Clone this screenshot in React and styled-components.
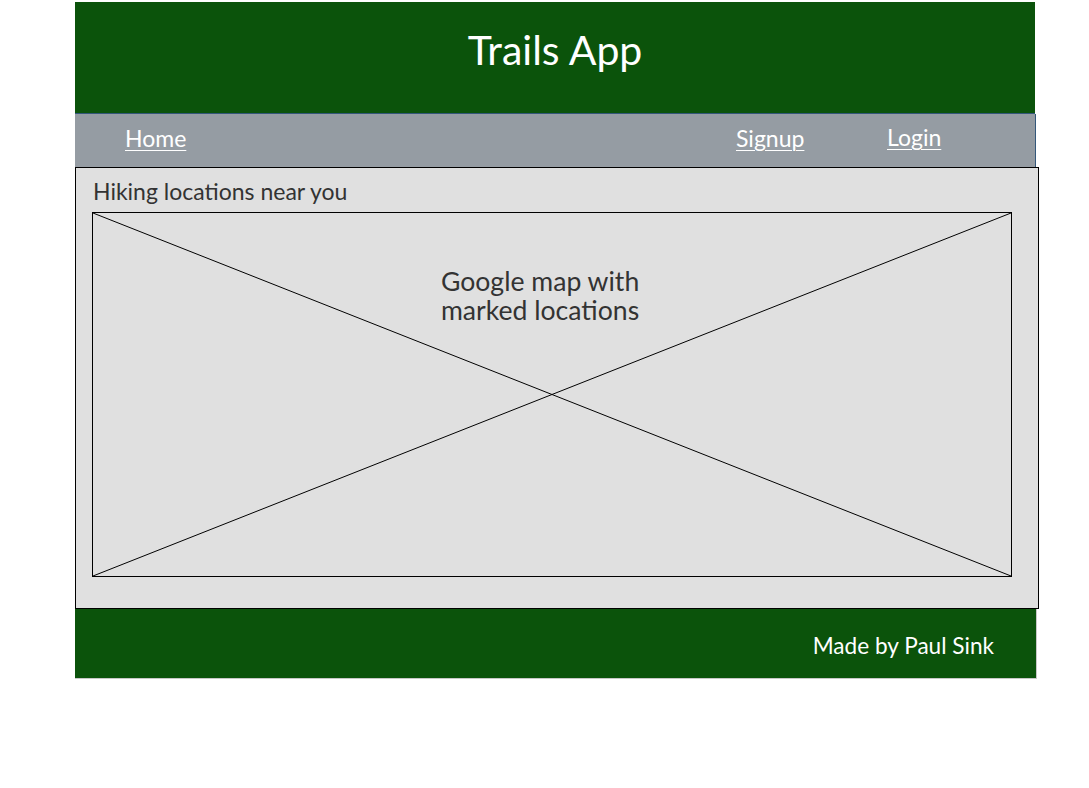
import React from "react";
import styled, { createGlobalStyle } from "styled-components";

const Global = createGlobalStyle`
  html, body { margin: 0; padding: 0; background: #ffffff; }
  body { font-family: "Lato", "Open Sans", sans-serif; }
`;

const GREEN = "#0b530b";

const Page = styled.div`
  display: flex;
  flex-direction: column;
  align-items: flex-start;
  padding: 2px 0 0 75px;
`;

const Header = styled.header`
  width: 960px;
  height: 112px;
  background: ${GREEN};
  border-bottom: 1px solid #34577a;
  box-sizing: border-box;
  display: flex;
  justify-content: center;
  align-items: flex-start;
`;

const Title = styled.h1`
  margin: 23px 0 0;
  font-weight: 400;
  font-size: 41px;
  line-height: 50px;
  color: #ffffff;
`;

const Nav = styled.nav`
  width: 961px;
  height: 53px;
  box-sizing: border-box;
  background: #959ca3;
  border-right: 1px solid #34577a;
  display: flex;
  align-items: center;
  padding-left: 50px;
`;

const NavSlot = styled.div`
  width: ${(p) => p.$width}px;
  margin-left: ${(p) => (p.$push ? "auto" : "0")};
  display: flex;
  margin-top: ${(p) => (p.$lift ? "-7px" : "-6px")};
`;

const NavLink = styled.a`
  color: #ffffff;
  font-size: 23px;
  text-decoration: underline;
  text-underline-offset: 3px;
  text-decoration-thickness: 1px;
`;

const Content = styled.main`
  width: 964px;
  height: 442px;
  box-sizing: border-box;
  background: #e0e0e0;
  border: 1px solid #000000;
  padding: 9px 0 0 16px;
  display: flex;
  flex-direction: column;
`;

const SectionTitle = styled.h2`
  margin: 0 0 7px 1px;
  font-weight: 400;
  font-size: 23px;
  line-height: 28px;
  color: #333333;
`;

const MapBox = styled.div`
  position: relative;
  width: 920px;
  height: 365px;
  box-sizing: border-box;
  border: 1px solid #000000;
  padding: 54px 0 0 348px;
`;

const Cross = styled.svg`
  position: absolute;
  inset: 0;
  width: 100%;
  height: 100%;
`;

const MapLabel = styled.p`
  position: relative;
  margin: 0;
  font-size: 26.6px;
  line-height: 29px;
  color: #333333;
`;

const Footer = styled.footer`
  width: 962px;
  height: 70px;
  box-sizing: border-box;
  background: ${GREEN};
  border-right: 1px solid #c8c8c8;
  border-bottom: 1px solid #c8c8c8;
  display: flex;
  align-items: center;
  justify-content: flex-end;
  padding: 3px 42px 0 0;
`;

const FooterText = styled.span`
  color: #ffffff;
  font-size: 22.6px;
`;

export default function App() {
  return (
    <>
      <Global />
      <Page>
        <Header>
          <Title>Trails App</Title>
        </Header>
        <Nav>
          <NavSlot $width={80}>
            <NavLink href="#">Home</NavLink>
          </NavSlot>
          <NavSlot $width={151} $push>
            <NavLink href="#">Signup</NavLink>
          </NavSlot>
          <NavSlot $width={148} $lift>
            <NavLink href="#">Login</NavLink>
          </NavSlot>
        </Nav>
        <Content>
          <SectionTitle>Hiking locations near you</SectionTitle>
          <MapBox>
            <Cross viewBox="0 0 918 363" preserveAspectRatio="none">
              <line x1="0" y1="0" x2="918" y2="363" stroke="#000" strokeWidth="1" />
              <line x1="0" y1="363" x2="918" y2="0" stroke="#000" strokeWidth="1" />
            </Cross>
            <MapLabel>
              Google map with
              <br />
              marked locations
            </MapLabel>
          </MapBox>
        </Content>
        <Footer>
          <FooterText>Made by Paul Sink</FooterText>
        </Footer>
      </Page>
    </>
  );
}
